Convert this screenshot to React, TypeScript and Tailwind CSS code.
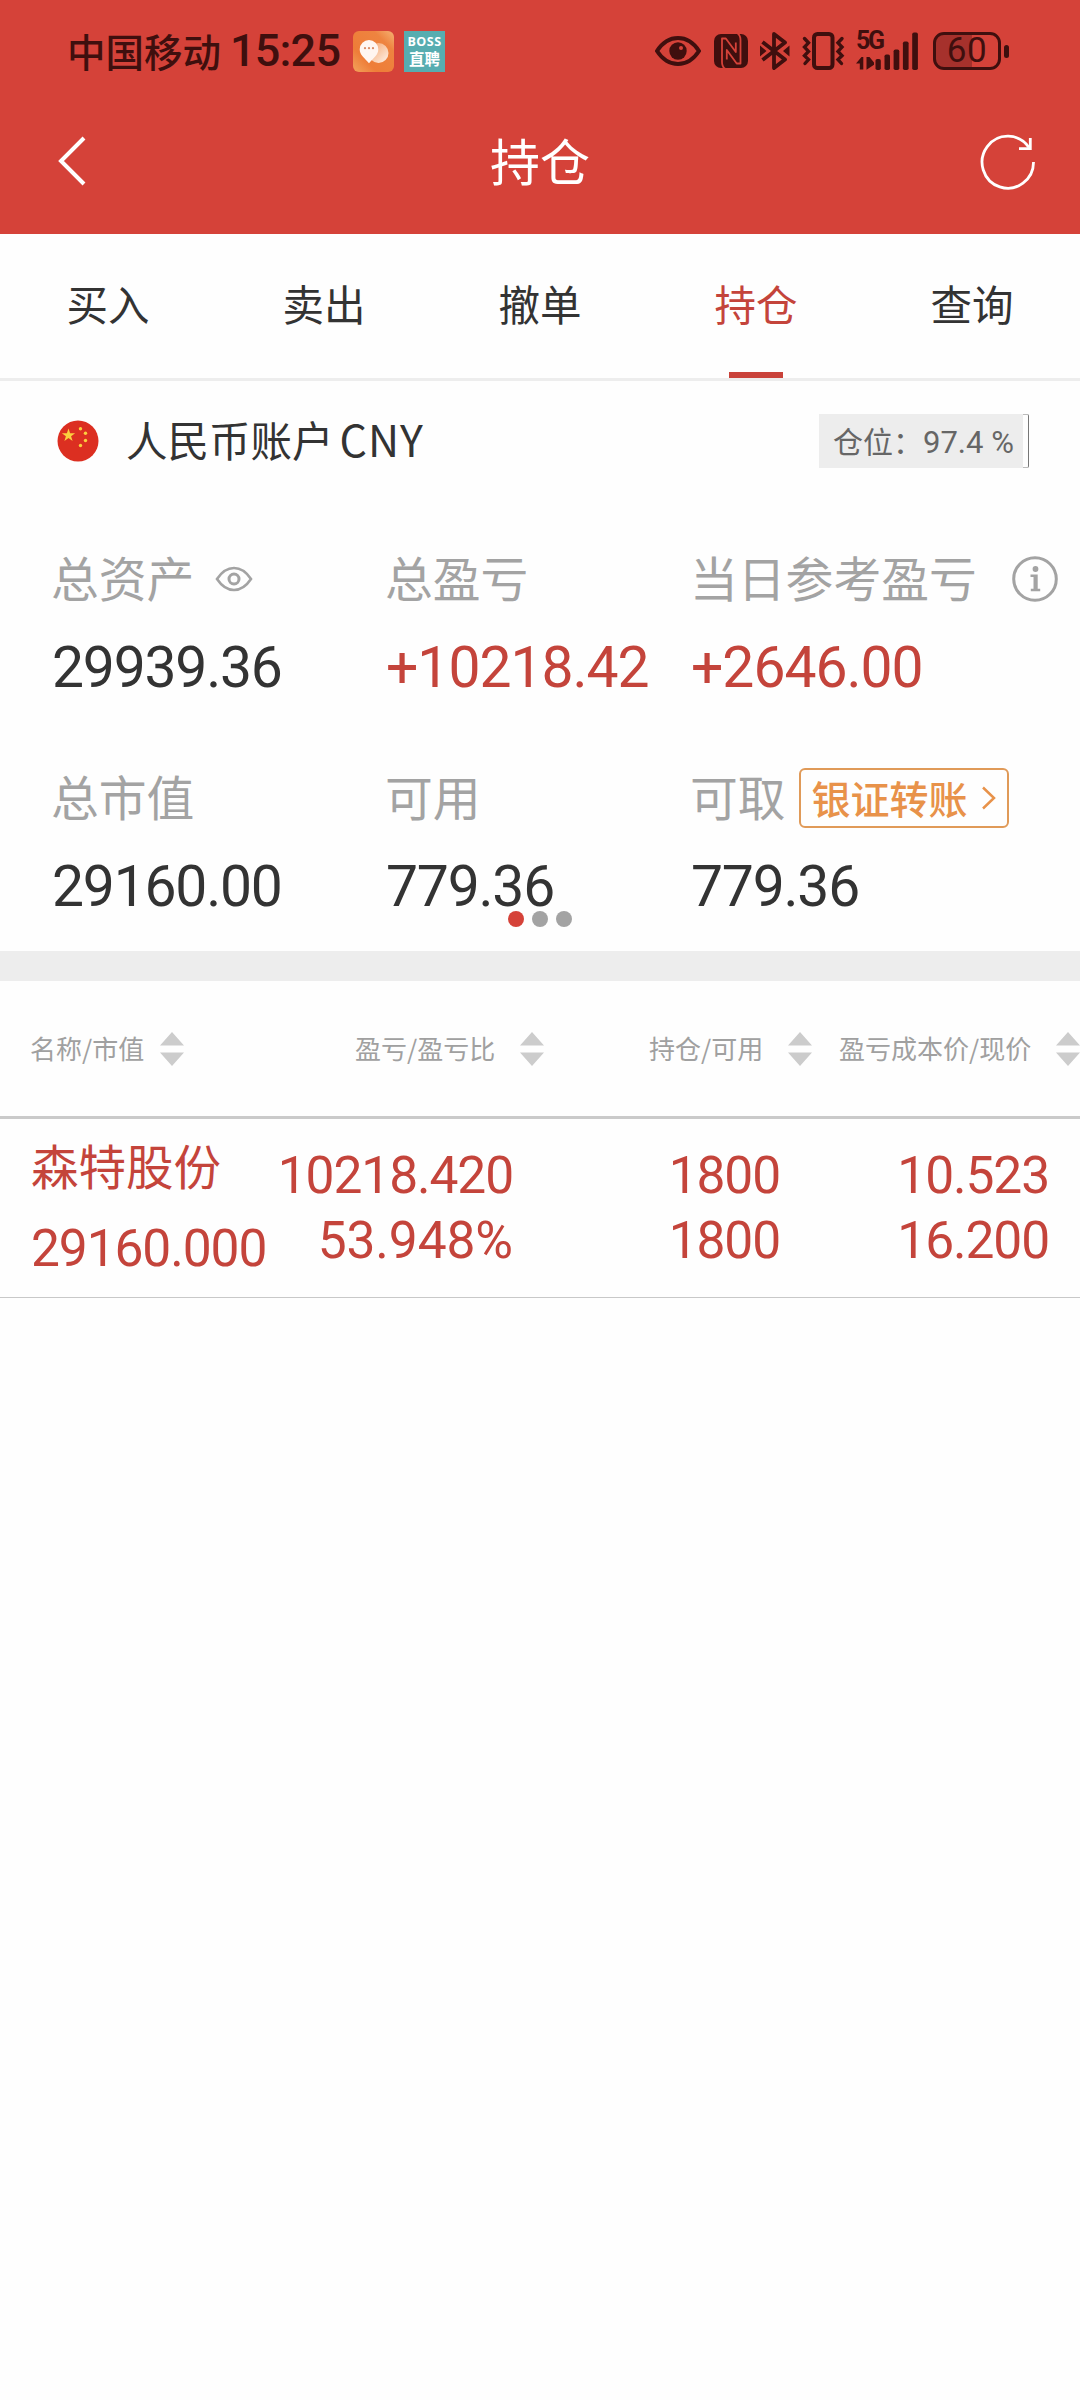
import clsx from 'clsx';
import { ReactNode, useState } from 'react';

const TABS = ['买入', '卖出', '撤单', '持仓', '查询'];

const COLUMNS = [
  { label: '名称/市值', className: 'ml-[30px] w-[130px]' },
  { label: '盈亏/盈亏比', className: 'ml-[171px] w-[165px]' },
  { label: '持仓/可用', className: 'ml-[105px] w-[139px]' },
  { label: '盈亏成本价/现价', className: 'ml-[27px] w-[217px]' },
];

const POSITIONS = [
  {
    name: '森特股份',
    marketValue: '29160.000',
    profit: '10218.420',
    profitRate: '53.948%',
    amount: '1800',
    available: '1800',
    cost: '10.523',
    price: '16.200',
  },
];

const StatusBar = () => (
  <div className="flex h-[102px] items-center text-[#3f0f0e]">
    <span className="ml-[67px] w-[163px] pb-[3px] text-[38.500px] leading-[46px] font-medium">中国移动</span>
    <span className="w-[123px] font-['Roboto'] text-[45px] leading-[46px] font-medium tracking-[-0.8px]">15:25</span>
    <svg width="41" height="41" viewBox="0 0 41 41">
      <defs>
        <linearGradient id="chat-bg" x1="0" y1="1" x2="1" y2="0">
          <stop offset="0" stopColor="#f3a35c" />
          <stop offset="0.3" stopColor="#ee7d38" />
          <stop offset="0.75" stopColor="#ee8440" />
          <stop offset="1" stopColor="#f5b273" />
        </linearGradient>
        <linearGradient id="chat-back" x1="0" y1="0" x2="1" y2="1">
          <stop offset="0" stopColor="#f3a066" />
          <stop offset="1" stopColor="#fff3ea" />
        </linearGradient>
      </defs>
      <rect width="41" height="41" rx="6" fill="url(#chat-bg)" />
      <circle cx="25.500" cy="22" r="10" fill="url(#chat-back)" />
      <path d="M16 9a9.300 9.300 0 0 1 9.300 9.300c0 5.500-4.500 8.500-9.300 14-4.800-5.500-9.300-8.500-9.300-14A9.300 9.300 0 0 1 16 9Z" fill="#fff6f1" />
      <circle cx="12" cy="17.200" r="1.100" fill="#d98a63" />
      <circle cx="16" cy="17.200" r="1.100" fill="#d98a63" />
      <circle cx="20" cy="17.200" r="1.100" fill="#d98a63" />
    </svg>
    <div className="ml-[10px] flex h-[41px] w-[41px] flex-col items-center bg-[#57adb0] pt-[3px] text-white">
      <span className="font-['Open_Sans'] text-[12.500px] leading-[16px] font-bold tracking-[0.5px]">BOSS</span>
      <span className="text-[15.500px] leading-[16px] font-bold">直聘</span>
    </div>

    <svg className="ml-[210px]" width="46" height="30" viewBox="0 0 46 30" fill="none">
      <path d="M2 15C7.500 6.500 14.500 2 23 2s15.500 4.500 21 13c-5.500 8.500-12.500 13-21 13S7.500 23.500 2 15Z" stroke="currentColor" strokeWidth="4" />
      <circle cx="23" cy="15" r="8.700" fill="currentColor" />
      <circle cx="26" cy="12" r="2" fill="#d54239" />
    </svg>
    <svg className="ml-[13px]" width="35" height="36" viewBox="0 0 35 36" fill="none">
      <rect x="0" y="1" width="34" height="34" rx="7" fill="currentColor" />
      <g stroke="#d54239" strokeWidth="1.800" strokeLinejoin="round">
        <path d="M11.500 36C9 34.500 8 32.500 8 29V5.500h3.800L21.800 19V9.500" />
        <path d="M23 0c2.500 1.500 3.500 3.500 3.500 7v23.500h-3.800L12.800 17v9.500" />
      </g>
    </svg>
    <svg className="ml-[11px]" width="30" height="40" viewBox="0 0 30 40" fill="none" stroke="currentColor" strokeWidth="3.800" strokeLinejoin="round">
      <path d="M2.500 11 25 28.500 14 37V3l11 8.500L2.500 29" />
      <path d="m0 14.500 6.500 5.500L0 25.500ZM29.500 14.500 23 20l6.500 5.500Z" fill="currentColor" stroke="none" />
    </svg>
    <svg className="ml-[12px]" width="43" height="38" viewBox="0 0 43 38" fill="none" stroke="currentColor">
      <rect x="12" y="2" width="18.500" height="34" rx="3.500" strokeWidth="4" />
      <path d="m2.500 6.500 4 4.300-4 4.300 4 4.300-4 4.300 4 3.800-3.500 4M40 6.500l-4 4.300 4 4.300-4 4.300 4 4.300-4 3.800 3.500 4" strokeWidth="3.400" strokeLinecap="round" />
    </svg>
    <div className="relative ml-[11px] h-[40px] w-[63px]">
      <span className="absolute top-0 left-0 font-['Roboto'] text-[25px] leading-[20px] font-bold tracking-[-2.400px]">5G</span>
      <svg width="63" height="40" viewBox="0 0 63 40" fill="currentColor">
        <path d="M0 32.500 5.500 26h1.800v12.500H3.800v-6ZM10.500 26h3l4.500 5.500v2.200l-7.500 5Z" />
        <rect x="19.500" y="28" width="5.300" height="11" rx="1.800" />
        <rect x="28.500" y="23.500" width="5.500" height="15.500" rx="1.800" />
        <rect x="37.600" y="18.500" width="5.700" height="20.500" rx="1.800" />
        <rect x="46.900" y="10.500" width="5.700" height="28.500" rx="1.800" />
        <rect x="56.200" y="1.500" width="5.700" height="37.500" rx="1.800" />
      </svg>
    </div>
    <div className="ml-[14px] flex h-[38px] w-[68px] items-center justify-center rounded-[11px] border-[3px] border-[#3f0f0e] bg-linear-to-r from-[#a6312c] from-58% to-[#d54239] to-58% font-['Roboto'] text-[35px] leading-[38px] tracking-[0.5px]">
      60
    </div>
    <span className="ml-[3px] h-[13px] w-[5px] rounded-full bg-[#3f0f0e]" />
  </div>
);

const Header = ({ title }: { title: string }) => (
  <header className="h-[234px] bg-[#d54239]">
    <StatusBar />
    <div className="flex h-[120px] items-center justify-between pr-[44px] pl-[57px] text-white">
      <button type="button" aria-label="返回" className="w-[43px] pb-[3px]">
        <svg width="30" height="52" viewBox="0 0 30 52" fill="none">
          <path d="M27 3 4 26l23 23" stroke="currentColor" strokeWidth="4" />
        </svg>
      </button>
      <h1 className="pb-[6px] text-[50px] leading-[60px] font-normal">{title}</h1>
      <button type="button" aria-label="刷新">
        <svg width="56" height="56" viewBox="0 0 56 56" fill="none" stroke="currentColor" strokeWidth="2.800">
          <path d="M53.500 28A25.700 26 0 1 1 49 13.500" />
          <path d="M50.300 4v10.700H39" />
        </svg>
      </button>
    </div>
  </header>
);

const TabBar = () => {
  const [selected, setSelected] = useState('持仓');

  return (
    <nav className="flex h-[147px] border-b-[3px] border-[#ededed]">
      {TABS.map((tab) => (
        <button
          key={tab}
          type="button"
          onClick={() => setSelected(tab)}
          className={clsx('flex w-[216px] flex-col items-center', tab === selected ? 'text-[#c4443b]' : 'text-[#333]')}
        >
          <span className="mt-[39px] h-[99px] text-[41.500px] leading-[60px]">{tab}</span>
          {tab === selected && <span className="h-[6px] w-[54px] bg-[#c9423a]" />}
        </button>
      ))}
    </nav>
  );
};

const ChinaFlag = () => (
  <svg width="42" height="42" viewBox="0 0 42 42">
    <circle cx="21" cy="21" r="20.500" fill="#dc2f21" />
    <g fill="#fbd03f">
      <path d="m11.500 8.500 1.600 4.700h5l-4 3 1.500 4.800-4.100-2.900-4.100 2.900 1.500-4.800-4-3h5Z" />
      <circle cx="23.500" cy="8.800" r="1.700" />
      <circle cx="28.500" cy="13.200" r="1.700" />
      <circle cx="28.500" cy="20.500" r="1.700" />
      <circle cx="23.500" cy="25.500" r="1.700" />
    </g>
  </svg>
);

const AccountRow = () => (
  <div className="flex h-[120px] items-center pr-[51px] pl-[57px]">
    <ChinaFlag />
    <span className="ml-[27px] pb-[5px] text-[41.500px] leading-[60px] text-[#333]">人民币账户</span>
    <span className="ml-[6px] pb-[7px] text-[43px] leading-[60px] tracking-[1px] text-[#333]">CNY</span>
    <div className="ml-auto flex h-[54px] w-[210px] rounded-[2px] border-r border-[#777]">
      <div className="flex w-[204px] items-center bg-[#ededed] pl-[14px] text-[#666]">
        <span className="pb-[2px] text-[30px] leading-[40px]">仓位：</span>
        <span className="pt-[3px] font-['Roboto'] text-[31px] leading-[40px] whitespace-pre">97.4 %</span>
      </div>
      <span className="grow border-y border-[#bbb]" />
    </div>
  </div>
);

interface StatProps {
  label: string;
  value: string;
  isUp?: boolean;
  children?: ReactNode;
}

const Stat = ({ label, value, isUp, children }: StatProps) => (
  <div className="h-[219px]">
    <div className="flex h-[60px] items-center whitespace-nowrap">
      <span className="-ml-[1px] pb-[5px] text-[47.800px] leading-[60px] text-[#a3a3a3]">{label}</span>
      {children}
    </div>
    <div
      className={clsx(
        "mt-[29px] font-['Roboto'] text-[57px] leading-[60px]",
        isUp ? 'tracking-[-1px] text-[#c4443b]' : 'tracking-[-1.2px] text-[#333]',
      )}
    >
      {value}
    </div>
  </div>
);

const AssetSummary = () => (
  <section className="relative h-[450px]">
    <div className="grid grid-cols-[334px_305px_1fr] pt-[48px] pl-[52px]">
      <Stat label="总资产" value="29939.36">
        <svg className="ml-[21px]" width="38" height="26" viewBox="0 0 38 26" fill="none" stroke="#a3a3a3" strokeWidth="2.600">
          <path d="M2 13C7 5.500 12.500 2 19 2s12 3.500 17 11c-5 7.500-10.500 11-17 11S7 20.500 2 13Z" />
          <circle cx="19" cy="13" r="5" strokeWidth="3" />
        </svg>
      </Stat>
      <Stat label="总盈亏" value="+10218.42" isUp />
      <Stat label="当日参考盈亏" value="+2646.00" isUp>
        <svg className="ml-[35px] shrink-0" width="46" height="46" viewBox="0 0 46 46" fill="none">
          <circle cx="23" cy="23" r="21.300" stroke="#a3a3a3" strokeWidth="3" />
          <circle cx="23.500" cy="13" r="2.900" fill="#a3a3a3" />
          <path d="M18.500 18.500h7.200v14.300h2.500v2.400h-9.400v-2.400h2.700V21h-3Z" fill="#a3a3a3" />
        </svg>
      </Stat>
      <Stat label="总市值" value="29160.00" />
      <Stat label="可用" value="779.36" />
      <Stat label="可取" value="779.36">
        <button type="button" className="ml-[13px] flex h-[60px] w-[210px] items-center rounded-[6px] border-2 border-[#e09a58] pl-[11px] text-[#e8924a]">
          <span className="pb-[3px] text-[39px] leading-[50px] font-medium">银证转账</span>
          <svg className="ml-[13px]" width="17" height="28" viewBox="0 0 17 28" fill="none">
            <path d="m2 3.500 11 10.500L2 24.500" stroke="currentColor" strokeWidth="2.500" />
          </svg>
        </button>
      </Stat>
    </div>
    {/* 페이지 인디케이터 */}
    <div className="absolute bottom-[24px] left-1/2 flex -translate-x-1/2 gap-2">
      <span className="h-4 w-4 rounded-full bg-[#d54239]" />
      <span className="h-4 w-4 rounded-full bg-[#a3a3a3]" />
      <span className="h-4 w-4 rounded-full bg-[#a3a3a3]" />
    </div>
  </section>
);

const SortIcon = () => (
  <svg className="shrink-0" width="24" height="34" viewBox="0 0 24 34" fill="#ccc">
    <path d="M12 0 24 13.500H0ZM12 34 24 20.500H0Z" />
  </svg>
);

const PositionTable = () => (
  <section>
    <div className="flex h-[138px] items-center overflow-hidden border-b-[3px] border-[#cacaca]">
      {COLUMNS.map(({ label, className }) => (
        <div key={label} className="flex shrink-0 items-center">
          <span className={clsx('pb-[2px] text-[26px] leading-[36px] whitespace-nowrap text-[#a0a0a0]', className)}>{label}</span>
          <SortIcon />
        </div>
      ))}
    </div>
    {POSITIONS.map((item) => (
      <div key={item.name} className="flex h-[179px] border-b border-[#c8c8c8] font-['Roboto'] text-[51.500px] leading-[65px] tracking-[-1.100px] text-[#c4443b]">
        <div className="w-[270px] pt-[16px] pl-[31px]">
          <div className="h-[82px] font-['Noto_Sans_CJK_SC'] text-[47.500px] leading-[60px] tracking-normal">{item.name}</div>
          <div className="leading-[64px]">{item.marketValue}</div>
        </div>
        <div className="w-[243px] pt-[24px] text-right">
          <div>{item.profit}</div>
          <div className="tracking-[-0.1px]">{item.profitRate}</div>
        </div>
        <div className="w-[267px] pt-[24px] text-right">
          <div>{item.amount}</div>
          <div>{item.available}</div>
        </div>
        <div className="w-[269px] pt-[24px] text-right">
          <div>{item.cost}</div>
          <div>{item.price}</div>
        </div>
      </div>
    ))}
  </section>
);

const App = () => {
  return (
    <main className="h-[2400px] w-[1080px] overflow-hidden bg-[#fefefe] font-['Noto_Sans_CJK_SC',sans-serif]">
      <Header title="持仓" />
      <TabBar />
      <AccountRow />
      <AssetSummary />
      <div className="h-[30px] bg-[#ededed]" />
      <PositionTable />
    </main>
  );
};

export default App;
